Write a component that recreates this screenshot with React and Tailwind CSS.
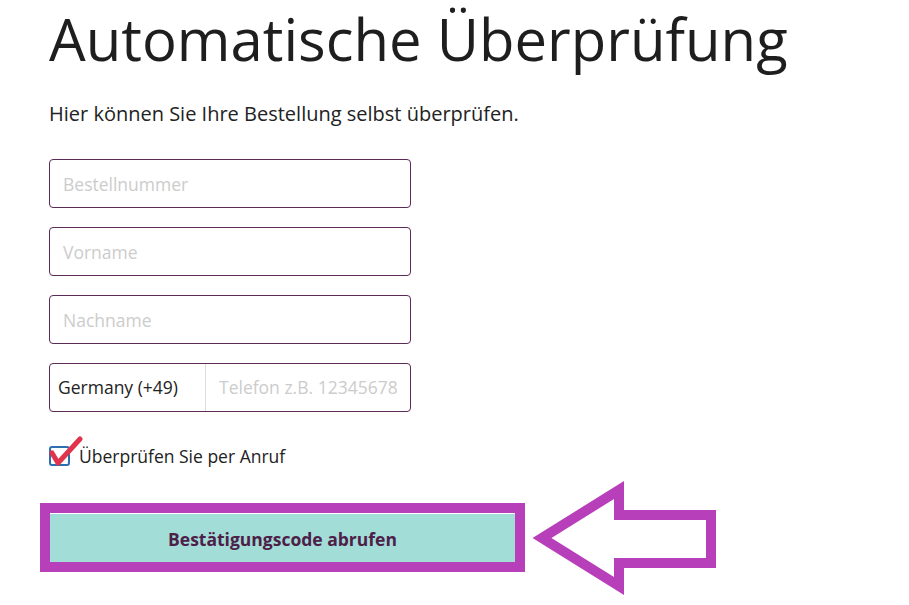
import React from "react";

const fields = ["Bestellnummer", "Vorname", "Nachname"];

const App = () => {
  return (
    <div className="min-h-screen bg-white font-['Open_Sans',sans-serif] pl-[49px]">
      <h1 className="pt-[7px] text-[58px] leading-[64px] text-[#1e1e1e] font-medium whitespace-nowrap">
        Automatische Überprüfung
      </h1>
      <p className="mt-[30px] text-[20px] leading-[26px] text-[#222222]">
        Hier können Sie Ihre Bestellung selbst überprüfen.
      </p>

      <div className="mt-[32px] flex flex-col gap-[19px] w-[362px]">
        {fields.map((f) => (
          <input
            key={f}
            placeholder={f}
            className="h-[49px] w-full rounded-[4px] border border-[#5b2a56] px-[13px] text-[17.5px] text-[#222] placeholder:text-[#cccccc] outline-none"
          />
        ))}
        <div className="h-[49px] flex rounded-[4px] border border-[#5b2a56] overflow-hidden">
          <div className="w-[156px] flex items-center pl-[8px] text-[17.5px] text-[#222222] border-r border-[#dddddd]">
            Germany (+49)
          </div>
          <input
            placeholder="Telefon z.B. 12345678"
            className="flex-1 min-w-0 px-[13px] text-[17.5px] placeholder:text-[#cccccc] outline-none"
          />
        </div>
      </div>

      {/* checkbox */}
      <div className="mt-[32px] flex items-center h-[24px]">
        <div className="relative w-[21px] h-[20px] rounded-[3px] border-2 border-[#2f6fb0]">
          <svg
            className="absolute left-[-2px] top-[-13px]"
            width="34"
            height="34"
            viewBox="0 0 34 34"
          >
            <path
              d="M3 18 L9 28 L31 4"
              fill="none"
              stroke="#e0344b"
              strokeWidth="5"
              strokeLinecap="round"
              strokeLinejoin="round"
            />
          </svg>
        </div>
        <span className="ml-[9px] text-[17.5px] text-[#222222]">
          Überprüfen Sie per Anruf
        </span>
      </div>

      {/* button with arrow */}
      <div className="relative mt-[35px] -ml-[9px] w-[485px]">
        <div className="border-[10px] border-[#b73fba] h-[69px] bg-white">
          <button className="w-full h-full pt-[2px] bg-[#a3ddd7] border-t border-white text-[17.5px] font-bold text-[#4d2048]">
            Bestätigungscode abrufen
          </button>
        </div>
        <svg
          className="absolute left-[490px] top-[-26px]"
          width="200"
          height="126"
          viewBox="0 0 200 126"
        >
          <polygon
            points="12,61 89,13 89,38 181,38 181,86 89,86 89,109"
            fill="none"
            stroke="#b73fba"
            strokeWidth="10"
            strokeLinejoin="miter"
            strokeMiterlimit="10"
          />
        </svg>
      </div>
    </div>
  );
};

export default App;
